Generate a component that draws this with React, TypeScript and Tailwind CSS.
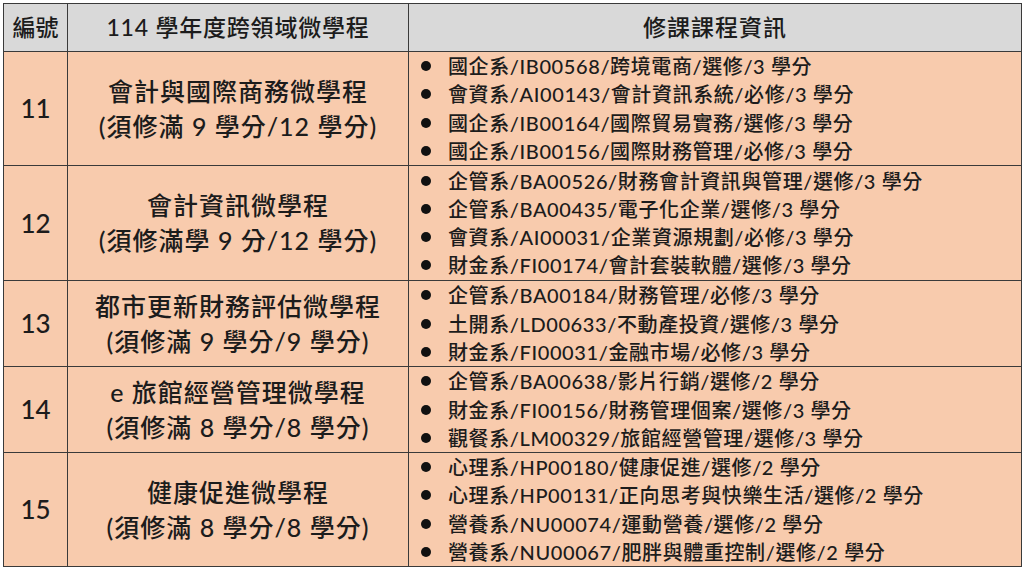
import React from "react";

type Row = { no: string; title: string; sub: string; items: string[]; h: number };

const rows: Row[] = [
  {
    no: "11",
    title: "會計與國際商務微學程",
    sub: "(須修滿 9 學分/12 學分)",
    h: 114,
    items: [
      "國企系/IB00568/跨境電商/選修/3 學分",
      "會資系/AI00143/會計資訊系統/必修/3 學分",
      "國企系/IB00164/國際貿易實務/選修/3 學分",
      "國企系/IB00156/國際財務管理/必修/3 學分",
    ],
  },
  {
    no: "12",
    title: "會計資訊微學程",
    sub: "(須修滿學 9 分/12 學分)",
    h: 115,
    items: [
      "企管系/BA00526/財務會計資訊與管理/選修/3 學分",
      "企管系/BA00435/電子化企業/選修/3 學分",
      "會資系/AI00031/企業資源規劃/必修/3 學分",
      "財金系/FI00174/會計套裝軟體/選修/3 學分",
    ],
  },
  {
    no: "13",
    title: "都市更新財務評估微學程",
    sub: "(須修滿 9 學分/9 學分)",
    h: 86,
    items: [
      "企管系/BA00184/財務管理/必修/3 學分",
      "土開系/LD00633/不動產投資/選修/3 學分",
      "財金系/FI00031/金融市場/必修/3 學分",
    ],
  },
  {
    no: "14",
    title: "e 旅館經營管理微學程",
    sub: "(須修滿 8 學分/8 學分)",
    h: 86,
    items: [
      "企管系/BA00638/影片行銷/選修/2 學分",
      "財金系/FI00156/財務管理個案/選修/3 學分",
      "觀餐系/LM00329/旅館經營管理/選修/3 學分",
    ],
  },
  {
    no: "15",
    title: "健康促進微學程",
    sub: "(須修滿 8 學分/8 學分)",
    h: 114,
    items: [
      "心理系/HP00180/健康促進/選修/2 學分",
      "心理系/HP00131/正向思考與快樂生活/選修/2 學分",
      "營養系/NU00074/運動營養/選修/2 學分",
      "營養系/NU00067/肥胖與體重控制/選修/2 學分",
    ],
  },
];

export default function App() {
  return (
    <div
      className="w-[1024px] h-[573px] bg-white pt-[3px] pl-[3px] overflow-hidden text-[#1c1c1c]"
      style={{ fontFamily: "Lato, 'Noto Sans CJK TC', sans-serif" }}
    >
      <table className="table-fixed border-collapse w-[1018px]">
        <colgroup>
          <col className="w-[64px]" />
          <col className="w-[341px]" />
          <col className="w-[613px]" />
        </colgroup>
        <thead>
          <tr className="h-[48px] bg-[#d9d9d9]">
            <th className="border border-[#3a3a3a] text-[23px] font-medium text-center p-0">編號</th>
            <th className="border border-[#3a3a3a] text-[23px] font-medium text-center p-0 tracking-[0.8px]">114 學年度跨領域微學程</th>
            <th className="border border-[#3a3a3a] text-[23px] font-medium text-center p-0 tracking-[1px]">修課課程資訊</th>
          </tr>
        </thead>
        <tbody>
          {rows.map((r) => (
            <tr key={r.no} className="bg-[#f8cbad]" style={{ height: r.h }}>
              <td className="border border-[#3a3a3a] text-center text-[26px] font-medium p-0">{r.no}</td>
              <td className="border border-[#3a3a3a] text-center text-[25px] font-medium leading-[35px] p-0 tracking-[1px]">
                <div>{r.title}</div>
                <div>{r.sub}</div>
              </td>
              <td className="border border-[#3a3a3a] p-0 align-middle">
                <ul>
                  {r.items.map((it) => (
                    <li key={it} className="flex items-center h-[28.2px] text-[20px] font-medium tracking-[0.6px]">
                      <span className="w-[10px] h-[10px] rounded-full bg-[#111] ml-[12px] mr-[17px] shrink-0" />
                      <span>{it}</span>
                    </li>
                  ))}
                </ul>
              </td>
            </tr>
          ))}
        </tbody>
      </table>
    </div>
  );
}
